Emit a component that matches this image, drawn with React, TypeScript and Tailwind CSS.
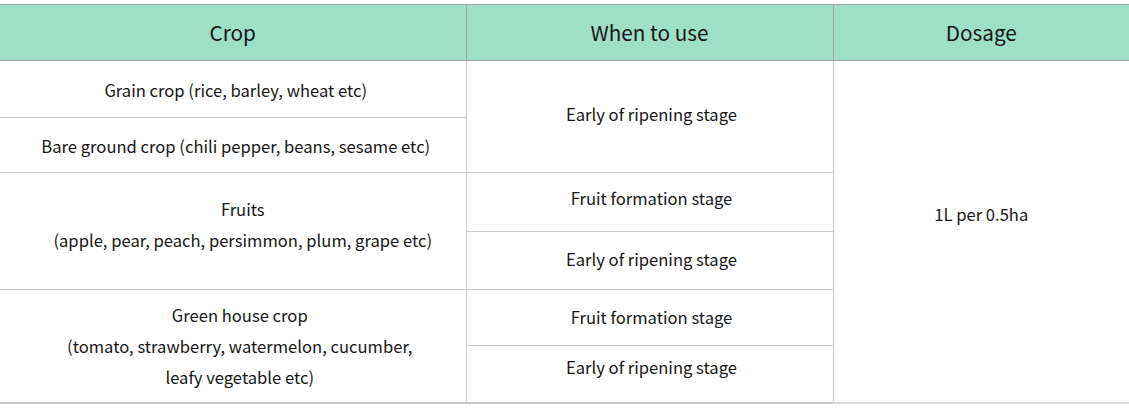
const rowCls = 'border-b border-[#cacaca] text-center align-middle';

export default function App() {
    return (
        <div className="w-[1129px] h-[410px] bg-white pt-[4px] text-[#161616]" style={{ fontFamily: '"Noto Sans CJK KR", "Noto Sans", sans-serif' }}>
            <table className="w-full border-collapse table-fixed">
                <colgroup>
                    <col className="w-[466px]" />
                    <col className="w-[367px]" />
                    <col />
                </colgroup>
                <thead>
                    <tr className="bg-[#9ee0c7] text-[20.7px]">
                        <th className="h-[56px] font-normal border-t border-b border-r border-[#a3a3a3]">Crop</th>
                        <th className="h-[56px] font-normal border-t border-b border-r border-[#a3a3a3]">When to use</th>
                        <th className="h-[56px] font-normal border-t border-b border-[#a3a3a3]">Dosage</th>
                    </tr>
                </thead>
                <tbody className="text-[16.6px]">
                    <tr>
                        <td className={`h-[57px] border-r pt-[2px] pl-[6px] ${rowCls}`}>Grain crop (rice, barley, wheat etc)</td>
                        <td rowSpan={2} className={`border-r pb-[4px] pl-[4px] ${rowCls}`}>Early of ripening stage</td>
                        <td rowSpan={6} className="text-center align-middle pb-[34px] border-b-2 border-[#dcdcdc]">1L per 0.5ha</td>
                    </tr>
                    <tr>
                        <td className={`h-[55px] border-r pt-[2px] pl-[6px] ${rowCls}`}>Bare ground crop (chili pepper, beans, sesame etc)</td>
                    </tr>
                    <tr>
                        <td rowSpan={2} className={`border-r leading-[31px] pb-[12px] pl-[20px] ${rowCls}`}>
                            Fruits
                            <br />
                            (apple, pear, peach, persimmon, plum, grape etc)
                        </td>
                        <td className={`h-[59px] border-r pb-[8px] pl-[4px] ${rowCls}`}>Fruit formation stage</td>
                    </tr>
                    <tr>
                        <td className={`h-[58px] border-r pb-[2px] pl-[4px] ${rowCls}`}>Early of ripening stage</td>
                    </tr>
                    <tr>
                        <td rowSpan={2} className="border-r border-b-2 border-[#cacaca] text-center align-middle leading-[31px] pt-[2px] pl-[14px]">
                            Green house crop
                            <br />
                            (tomato, strawberry, watermelon, cucumber,
                            <br />
                            leafy vegetable etc)
                        </td>
                        <td className={`h-[56px] border-r pl-[4px] ${rowCls}`}>Fruit formation stage</td>
                    </tr>
                    <tr>
                        <td className="h-[57px] border-r border-b-2 border-[#cacaca] text-center align-middle pb-[12px] pl-[4px]">Early of ripening stage</td>
                    </tr>
                </tbody>
            </table>
        </div>
    );
}
